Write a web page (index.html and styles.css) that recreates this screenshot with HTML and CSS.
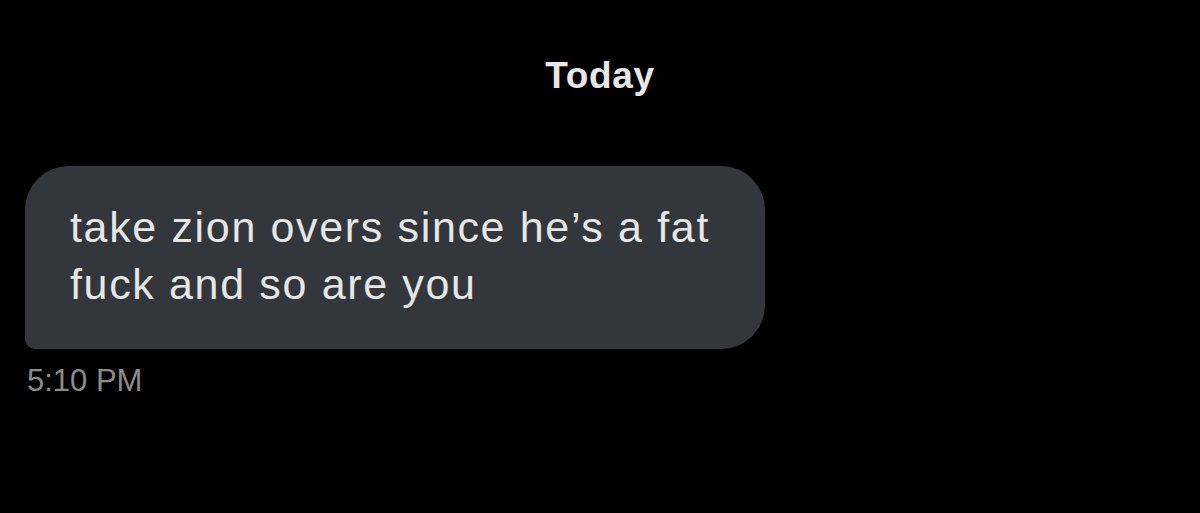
FILE: index.html
```html
<!DOCTYPE html>
<html>
<head>
  <title>Messages</title>
  <link rel="stylesheet" href="styles.css">
</head>
<body>
  <div class="thread">
    <div class="day">Today</div>

    <div class="msg">
      <div class="bubble">take zion overs since he’s a fat fuck and so are you</div>
      <div class="time">5:10 PM</div>
    </div>
  </div>
</body>
</html>
```

FILE: styles.css
```css
body    { margin: 0; background: #000; font-family: "Liberation Sans", Arial, sans-serif; }
.thread { height: 513px; padding: 0 25px; box-sizing: border-box; }

.day    { padding-top: 56px; text-align: center; color: #e7e7e7; font-weight: 700; font-size: 37px; line-height: 40px; letter-spacing: 0.7px; }

.msg    { margin-top: 70px; }
.bubble {
  width: 740px; box-sizing: border-box;
  padding: 33px 40px 36px 45px;
  background: #33363a; color: #e6e6e6;
  border-radius: 44px 44px 44px 10px;
  font-size: 43px; line-height: 57px; letter-spacing: 1.65px;
}
.time   { margin-top: 14px; padding-left: 2px; color: #8b8b8b; font-size: 31px; line-height: 36px; }
```
